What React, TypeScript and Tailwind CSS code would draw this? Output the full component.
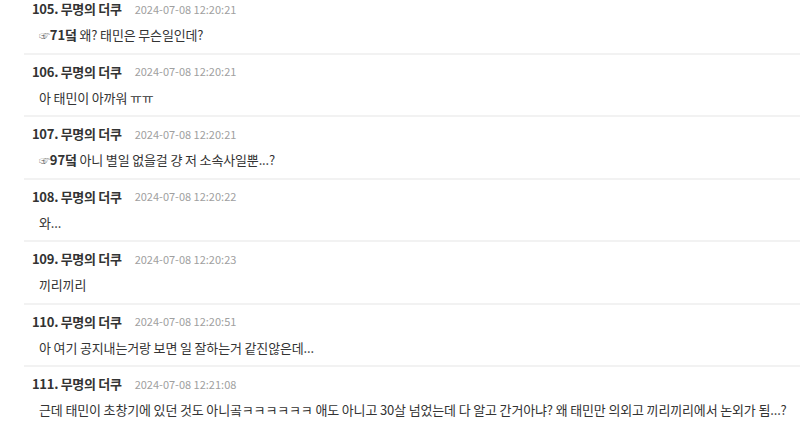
const comments = [
  { no: 105, date: "2024-07-08 12:20:21", ref: "71덬", text: "왜? 태민은 무슨일인데?" },
  { no: 106, date: "2024-07-08 12:20:21", text: "아 태민이 아까워 ㅠㅠ" },
  { no: 107, date: "2024-07-08 12:20:21", ref: "97덬", text: "아니 별일 없을걸 걍 저 소속사일뿐...?" },
  { no: 108, date: "2024-07-08 12:20:22", text: "와..." },
  { no: 109, date: "2024-07-08 12:20:23", text: "끼리끼리" },
  { no: 110, date: "2024-07-08 12:20:51", text: "아 여기 공지내는거랑 보면 일 잘하는거 같진않은데..." },
  {
    no: 111,
    date: "2024-07-08 12:21:08",
    text: "근데 태민이 초창기에 있던 것도 아니곸ㅋㅋㅋㅋㅋㅋ 애도 아니고 30살 넘었는데 다 알고 간거아냐? 왜 태민만 의외고 끼리끼리에서 논외가 됨...?",
  },
];

export default function App() {
  return (
    <div
      className="w-[800px] h-[425px] overflow-hidden bg-white text-[#333]"
      style={{ fontFamily: '"Malgun Gothic", "Noto Sans CJK KR", "Noto Sans", sans-serif' }}
    >
      <ul className="pl-[24px]">
        {comments.map((c, i) => (
          <li key={c.no} className={`border-b-2 border-[#f2f2f2] pb-[7.5px] ${i === 0 ? "pt-0" : "pt-2"}`}>
            <div className="flex items-center h-[18px] pl-2">
              <span className="text-[13px] font-bold text-[#333] tracking-[-0.3px]">
                {c.no}. 무명의 더쿠
              </span>
              <span className="ml-[13px] text-[11px] text-[#a0a0a0]">{c.date}</span>
            </div>
            <p className="mt-[7px] h-[20px] leading-[20px] pl-[15px] text-[13px] text-[#333] whitespace-nowrap tracking-[-0.15px]">
              {c.ref && (
                <>
                  <span className="text-[11px] text-[#777]">☞</span>
                  <b className="font-bold">{c.ref}</b>{" "}
                </>
              )}
              {c.text}
            </p>
          </li>
        ))}
      </ul>
    </div>
  );
}
